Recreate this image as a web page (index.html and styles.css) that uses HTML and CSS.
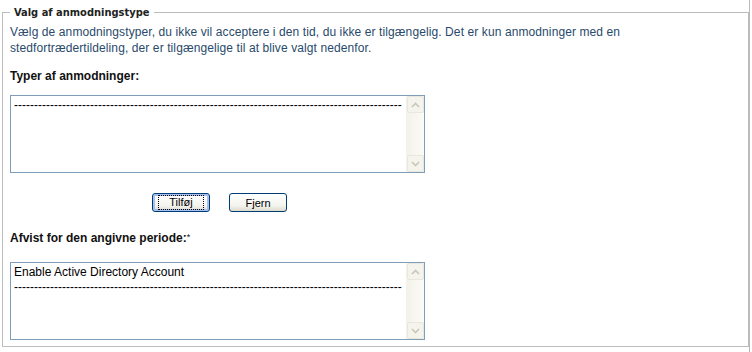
FILE: index.html
```html
<!DOCTYPE html>
<html lang="da">
<head>
    <meta charset="UTF-8">
    <title>Valg af anmodningstype</title>
    <link rel="stylesheet" href="styles.css">
</head>
<body>
    <div class="page">
        <fieldset class="group">
            <legend>Valg af anmodningstype</legend>
            <p class="desc">Vælg de anmodningstyper, du ikke vil acceptere i den tid, du ikke er tilgængelig. Det er kun anmodninger med en stedfortrædertildeling, der er tilgængelige til at blive valgt nedenfor.</p>

            <div class="label">Typer af anmodninger:</div>
            <div class="listbox first">
                <div class="items">
                    <div class="item">-------------------------------------------------------------------------------------------------</div>
                </div>
                <div class="scroll">
                    <div class="sbtn"><svg width="9" height="6" viewBox="0 0 9 6"><path d="M1 5 L4.5 1.5 L8 5" fill="none" stroke="#c9c7ba" stroke-width="1.6"/></svg></div>
                    <div class="track"></div>
                    <div class="sbtn"><svg width="9" height="6" viewBox="0 0 9 6"><path d="M1 1 L4.5 4.5 L8 1" fill="none" stroke="#c9c7ba" stroke-width="1.6"/></svg></div>
                </div>
            </div>

            <div class="buttons">
                <button type="button" class="btn focused"><span>Tilføj</span></button>
                <button type="button" class="btn"><span>Fjern</span></button>
            </div>

            <div class="label second">Afvist for den angivne periode:<span class="req">*</span></div>
            <div class="listbox">
                <div class="items">
                    <div class="item">Enable Active Directory Account</div>
                    <div class="item">-------------------------------------------------------------------------------------------------</div>
                </div>
                <div class="scroll">
                    <div class="sbtn"><svg width="9" height="6" viewBox="0 0 9 6"><path d="M1 5 L4.5 1.5 L8 5" fill="none" stroke="#c9c7ba" stroke-width="1.6"/></svg></div>
                    <div class="track"></div>
                    <div class="sbtn"><svg width="9" height="6" viewBox="0 0 9 6"><path d="M1 1 L4.5 4.5 L8 1" fill="none" stroke="#c9c7ba" stroke-width="1.6"/></svg></div>
                </div>
            </div>
        </fieldset>
    </div>
</body>
</html>
```
FILE: styles.css
```css
body {
    margin: 0;
    background: #ffffff;
    font-family: "Liberation Sans", Arial, sans-serif;
}

.page {
    width: 750px;
    height: 352px;
    border-right: 1px solid #b9b9b9;
    padding-top: 5px;
    box-sizing: border-box;
}

.group {
    margin: 0 0 0 2px;
    width: 747px;
    height: 342px;
    box-sizing: border-box;
    border: 1px solid #bcbcbc;
    padding: 0 7px;
}

.group legend {
    font-family: "DejaVu Sans Condensed", "DejaVu Sans", sans-serif;
    font-stretch: condensed;
    font-size: 11px;
    font-weight: bold;
    color: #222222;
    padding: 0 5px 0 4px;
    line-height: 15px;
}

.desc {
    margin: 4px 0 0 0;
    font-size: 12px;
    line-height: 16px;
    letter-spacing: 0.1px;
    color: #294a6b;
    width: 700px;
}

.label {
    font-size: 12px;
    font-weight: bold;
    color: #111111;
    margin-top: 13px;
    line-height: 15px;
}

.label.second {
    margin-top: 18px;
}

.req {
    font-size: 9px;
    vertical-align: 2px;
    font-weight: normal;
}

.listbox {
    display: flex;
    width: 415px;
    height: 78px;
    box-sizing: border-box;
    border: 1px solid #7f9db9;
    margin-top: 16px;
    background: #ffffff;
}

.listbox.first {
    margin-top: 11px;
}

.items {
    flex: 1;
    overflow: hidden;
    padding: 2px 3px;
}

.item {
    font-size: 12px;
    line-height: 15px;
    color: #000000;
    white-space: nowrap;
}

.scroll {
    width: 17px;
    display: flex;
    flex-direction: column;
    background: #f7f6f0;
    border-left: 1px solid #f2f1ea;
}

.sbtn {
    height: 17px;
    box-sizing: border-box;
    border: 1px solid #e9e8df;
    border-radius: 2px;
    background: #f4f3ec;
    display: flex;
    align-items: center;
    justify-content: center;
}

.track {
    flex: 1;
    background: linear-gradient(to right, #f3f2ea, #fbfbf7);
}

.buttons {
    display: flex;
    gap: 19px;
    margin: 20px 0 0 142px;
}

.btn {
    width: 58px;
    height: 19px;
    padding: 0;
    border: 1px solid #003c74;
    border-radius: 3px;
    background: linear-gradient(to bottom, #ffffff, #f3f3ee 70%, #dcd9cc);
    font-family: "Liberation Sans", Arial, sans-serif;
    font-size: 11px;
    color: #000000;
    display: flex;
    align-items: center;
    justify-content: center;
}

.btn.focused {
    box-shadow: inset 0 0 0 2px #a6c0f1;
}

.btn.focused span {
    border: 1px dotted #000000;
    padding: 1px 10px;
    line-height: 11px;
}
```
